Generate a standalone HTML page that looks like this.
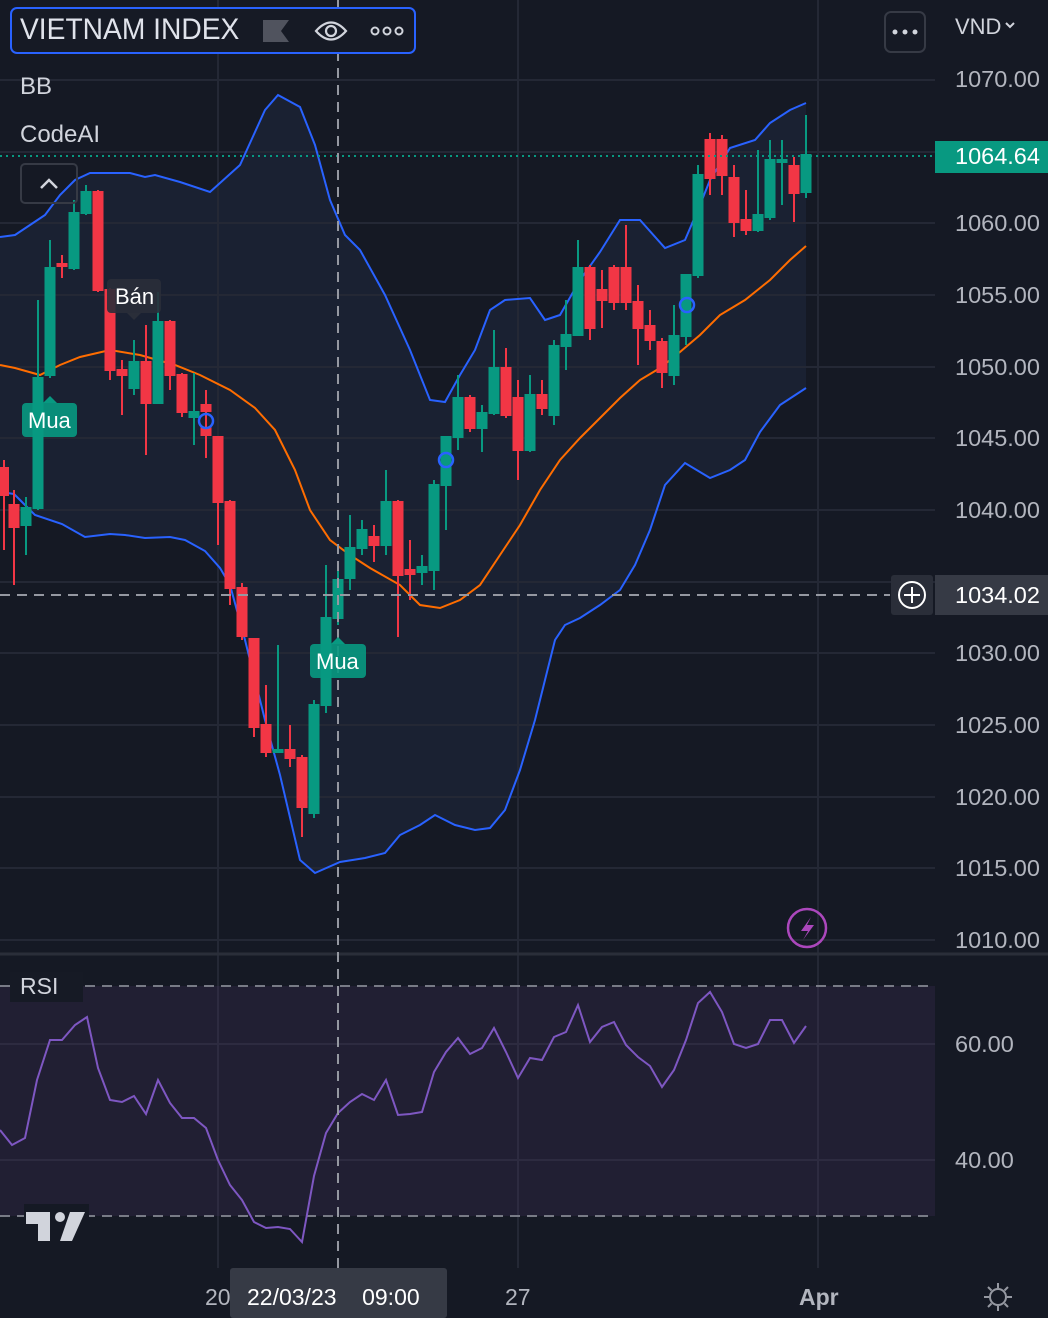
<!DOCTYPE html>
<html><head><meta charset="utf-8"><style>
html,body{margin:0;padding:0;background:#161a25;}
body{width:1048px;height:1318px;overflow:hidden;position:relative;font-family:"Liberation Sans",sans-serif;}
svg{position:absolute;left:0;top:0}
.t{position:absolute;color:#d1d4dc;white-space:nowrap}
.ax{position:absolute;left:955px;font-size:23.5px;color:#b2b5be;}
</style></head><body>
<svg width="1048" height="1318" viewBox="0 0 1048 1318">
<rect width="1048" height="1318" fill="#151924"/>
<polygon fill="#1a2132" points="0,237 15,235 30,225 45,215 60,195 75,180 90,173 130,173 145,177 155,175 180,182 210,192 240,165 265,110 278,95 300,107 315,145 330,200 345,235 360,250 385,295 410,350 430,400 445,402 460,375 475,350 490,310 505,300 530,298 545,320 560,315 580,280 600,252 620,220 640,220 665,248 685,240 700,205 710,180 730,148 755,140 770,123 790,110 806,103 806,388 780,405 760,432 745,460 730,470 710,478 685,463 665,485 650,530 635,565 620,590 600,605 580,618 565,625 555,640 545,680 535,720 520,770 505,810 490,828 475,830 455,825 435,815 420,825 400,835 385,853 365,858 340,862 315,873 300,860 280,775 265,720 245,640 230,585 220,568 205,551 185,540 170,537 145,538 125,535 110,534 85,537 62,524 35,515 25,505 14,494 0,492"/>
<g stroke="#242835" stroke-width="2">
<line x1="0" y1="80" x2="935" y2="80"/><line x1="0" y1="152" x2="935" y2="152"/><line x1="0" y1="223" x2="935" y2="223"/><line x1="0" y1="295" x2="935" y2="295"/><line x1="0" y1="367" x2="935" y2="367"/><line x1="0" y1="438" x2="935" y2="438"/><line x1="0" y1="510" x2="935" y2="510"/><line x1="0" y1="582" x2="935" y2="582"/><line x1="0" y1="653" x2="935" y2="653"/><line x1="0" y1="725" x2="935" y2="725"/><line x1="0" y1="797" x2="935" y2="797"/><line x1="0" y1="868" x2="935" y2="868"/><line x1="0" y1="940" x2="935" y2="940"/>
<line x1="218" y1="0" x2="218" y2="1268"/><line x1="518" y1="0" x2="518" y2="1268"/><line x1="818" y1="0" x2="818" y2="1268"/>
</g>
<line x1="0" y1="954" x2="1048" y2="954" stroke="#2a2e39" stroke-width="3"/>
<rect x="0" y="986" width="935" height="230" fill="#211f33"/>
<g stroke="#2d2b40" stroke-width="2"><line x1="0" y1="1044" x2="935" y2="1044"/><line x1="0" y1="1160" x2="935" y2="1160"/><line x1="218" y1="986" x2="218" y2="1216"/><line x1="518" y1="986" x2="518" y2="1216"/><line x1="818" y1="986" x2="818" y2="1216"/></g>
<g stroke="#787b86" stroke-width="2" stroke-dasharray="10,7"><line x1="0" y1="986" x2="935" y2="986"/><line x1="0" y1="1216" x2="935" y2="1216"/></g>
<polyline fill="none" stroke="#7e57c2" stroke-width="2" points="0,1130 12,1145 25,1138 37,1080 50,1040 62,1040 75,1025 87,1017 98,1068 110,1100 122,1102 134,1096 146,1114 158,1080 170,1103 182,1118 194,1118 206,1128 218,1160 230,1185 242,1200 254,1222 266,1228 278,1227 290,1229 302,1242 314,1176 326,1133 338,1113 350,1102 362,1094 374,1100 386,1080 398,1115 410,1114 422,1112 434,1072 446,1052 458,1038 470,1054 482,1048 494,1028 506,1052 518,1078 530,1058 542,1060 554,1037 566,1032 578,1005 590,1042 602,1027 614,1022 626,1045 638,1057 650,1066 662,1087 674,1070 686,1040 698,1003 710,992 722,1012 734,1044 746,1048 758,1044 770,1020 782,1020 794,1043 806,1026"/>
<polyline fill="none" stroke="#2962ff" stroke-width="2" points="0,237 15,235 30,225 45,215 60,195 75,180 90,173 130,173 145,177 155,175 180,182 210,192 240,165 265,110 278,95 300,107 315,145 330,200 345,235 360,250 385,295 410,350 430,400 445,402 460,375 475,350 490,310 505,300 530,298 545,320 560,315 580,280 600,252 620,220 640,220 665,248 685,240 700,205 710,180 730,148 755,140 770,123 790,110 806,103"/>
<polyline fill="none" stroke="#2962ff" stroke-width="2" points="0,492 14,494 25,505 35,515 62,524 85,537 110,534 125,535 145,538 170,537 185,540 205,551 220,568 230,585 245,640 265,720 280,775 300,860 315,873 340,862 365,858 385,853 400,835 420,825 435,815 455,825 475,830 490,828 505,810 520,770 535,720 545,680 555,640 565,625 580,618 600,605 620,590 635,565 650,530 665,485 685,463 710,478 730,470 745,460 760,432 780,405 806,388"/>
<polyline fill="none" stroke="#ff6d00" stroke-width="2" points="0,365 15,368 40,375 60,365 80,357 110,350 140,355 175,365 200,375 230,390 255,408 275,430 295,470 310,510 330,540 350,555 370,568 400,585 420,605 440,608 460,600 480,585 500,555 520,525 540,490 560,460 580,438 600,418 620,398 640,380 660,368 680,352 700,335 720,315 745,300 770,280 790,260 806,246"/>
<g stroke="#f23645" fill="#f23645" stroke-width="2">
<line x1="4" y1="460" x2="4" y2="550"/><rect x="0" y="468" width="8" height="27"/>
<line x1="14" y1="490" x2="14" y2="585"/><rect x="9.5" y="505" width="9" height="22"/>
<line x1="62" y1="255" x2="62" y2="278"/><rect x="57.5" y="264" width="9" height="2"/>
<line x1="98" y1="190" x2="98" y2="292"/><rect x="93.5" y="192" width="9" height="98"/>
<line x1="110" y1="288" x2="110" y2="380"/><rect x="105.5" y="290" width="9" height="80"/>
<line x1="122" y1="360" x2="122" y2="415"/><rect x="117.5" y="370" width="9" height="5"/>
<line x1="146" y1="325" x2="146" y2="455"/><rect x="141.5" y="362" width="9" height="41"/>
<line x1="170" y1="320" x2="170" y2="390"/><rect x="165.5" y="322" width="9" height="53"/>
<line x1="182" y1="373" x2="182" y2="417"/><rect x="177.5" y="375" width="9" height="37"/>
<line x1="206" y1="390" x2="206" y2="458"/><rect x="201.5" y="405" width="9" height="6"/><rect x="201.5" y="428" width="9" height="7"/>
<line x1="218" y1="437" x2="218" y2="545"/><rect x="213.5" y="437" width="9" height="65"/>
<line x1="230" y1="500" x2="230" y2="605"/><rect x="225.5" y="502" width="9" height="86"/>
<line x1="242" y1="583" x2="242" y2="640"/><rect x="237.5" y="588" width="9" height="48"/>
<line x1="254" y1="639" x2="254" y2="737"/><rect x="249.5" y="639" width="9" height="88"/>
<line x1="266" y1="685" x2="266" y2="757"/><rect x="261.5" y="725" width="9" height="27"/>
<line x1="290" y1="725" x2="290" y2="767"/><rect x="285.5" y="750" width="9" height="8"/>
<line x1="302" y1="755" x2="302" y2="837"/><rect x="297.5" y="758" width="9" height="49"/>
<line x1="374" y1="525" x2="374" y2="562"/><rect x="369.5" y="537" width="9" height="8"/>
<line x1="398" y1="500" x2="398" y2="637"/><rect x="393.5" y="502" width="9" height="73"/>
<line x1="410" y1="540" x2="410" y2="600"/><rect x="405.5" y="570" width="9" height="4"/>
<line x1="470" y1="395" x2="470" y2="432"/><rect x="465.5" y="398" width="9" height="30"/>
<line x1="506" y1="348" x2="506" y2="418"/><rect x="501.5" y="368" width="9" height="47"/>
<line x1="518" y1="380" x2="518" y2="480"/><rect x="513.5" y="398" width="9" height="52"/>
<line x1="542" y1="380" x2="542" y2="415"/><rect x="537.5" y="395" width="9" height="13"/>
<line x1="590" y1="265" x2="590" y2="340"/><rect x="585.5" y="268" width="9" height="60"/>
<line x1="602" y1="270" x2="602" y2="328"/><rect x="597.5" y="290" width="9" height="10"/>
<line x1="614" y1="265" x2="614" y2="310"/><rect x="609.5" y="268" width="9" height="34"/>
<line x1="626" y1="225" x2="626" y2="310"/><rect x="621.5" y="268" width="9" height="34"/>
<line x1="638" y1="285" x2="638" y2="365"/><rect x="633.5" y="302" width="9" height="26"/>
<line x1="650" y1="310" x2="650" y2="350"/><rect x="645.5" y="326" width="9" height="14"/>
<line x1="662" y1="338" x2="662" y2="388"/><rect x="657.5" y="342" width="9" height="30"/>
<line x1="710" y1="133" x2="710" y2="195"/><rect x="705.5" y="140" width="9" height="38"/>
<line x1="722" y1="135" x2="722" y2="195"/><rect x="717.5" y="140" width="9" height="35"/>
<line x1="734" y1="165" x2="734" y2="237"/><rect x="729.5" y="178" width="9" height="44"/>
<line x1="746" y1="190" x2="746" y2="235"/><rect x="741.5" y="220" width="9" height="10"/>
<line x1="794" y1="157" x2="794" y2="222"/><rect x="789.5" y="166" width="9" height="27"/>
</g>
<g stroke="#089981" fill="#089981" stroke-width="2">
<line x1="26" y1="497" x2="26" y2="555"/><rect x="21.5" y="508" width="9" height="17"/>
<line x1="38" y1="300" x2="38" y2="510"/><rect x="33.5" y="378" width="9" height="130"/>
<line x1="50" y1="240" x2="50" y2="378"/><rect x="45.5" y="268" width="9" height="107"/>
<line x1="74" y1="200" x2="74" y2="270"/><rect x="69.5" y="213" width="9" height="55"/>
<line x1="86" y1="185" x2="86" y2="215"/><rect x="81.5" y="192" width="9" height="21"/>
<line x1="134" y1="340" x2="134" y2="395"/><rect x="129.5" y="362" width="9" height="26"/>
<line x1="158" y1="292" x2="158" y2="403"/><rect x="153.5" y="322" width="9" height="81"/>
<line x1="194" y1="373" x2="194" y2="445"/><rect x="189.5" y="412" width="9" height="5"/>
<line x1="278" y1="645" x2="278" y2="752"/><rect x="273.5" y="750" width="9" height="2"/>
<line x1="314" y1="700" x2="314" y2="818"/><rect x="309.5" y="705" width="9" height="108"/>
<line x1="326" y1="565" x2="326" y2="713"/><rect x="321.5" y="618" width="9" height="87"/>
<line x1="338" y1="565" x2="338" y2="625"/><rect x="333.5" y="580" width="9" height="38"/>
<line x1="350" y1="515" x2="350" y2="590"/><rect x="345.5" y="548" width="9" height="30"/>
<line x1="362" y1="520" x2="362" y2="555"/><rect x="357.5" y="530" width="9" height="18"/>
<line x1="386" y1="470" x2="386" y2="555"/><rect x="381.5" y="502" width="9" height="43"/>
<line x1="422" y1="555" x2="422" y2="585"/><rect x="417.5" y="567" width="9" height="5"/>
<line x1="434" y1="480" x2="434" y2="590"/><rect x="429.5" y="485" width="9" height="85"/>
<line x1="446" y1="437" x2="446" y2="530"/><rect x="441.5" y="437" width="9" height="48"/>
<line x1="458" y1="375" x2="458" y2="450"/><rect x="453.5" y="398" width="9" height="39"/>
<line x1="482" y1="405" x2="482" y2="452"/><rect x="477.5" y="413" width="9" height="15"/>
<line x1="494" y1="330" x2="494" y2="415"/><rect x="489.5" y="368" width="9" height="45"/>
<line x1="530" y1="375" x2="530" y2="452"/><rect x="525.5" y="395" width="9" height="55"/>
<line x1="554" y1="340" x2="554" y2="425"/><rect x="549.5" y="346" width="9" height="69"/>
<line x1="566" y1="300" x2="566" y2="370"/><rect x="561.5" y="335" width="9" height="11"/>
<line x1="578" y1="240" x2="578" y2="335"/><rect x="573.5" y="268" width="9" height="67"/>
<line x1="674" y1="305" x2="674" y2="385"/><rect x="669.5" y="336" width="9" height="39"/>
<line x1="686" y1="275" x2="686" y2="345"/><rect x="681.5" y="275" width="9" height="61"/>
<line x1="698" y1="165" x2="698" y2="278"/><rect x="693.5" y="175" width="9" height="100"/>
<line x1="758" y1="150" x2="758" y2="232"/><rect x="753.5" y="215" width="9" height="15"/>
<line x1="770" y1="140" x2="770" y2="220"/><rect x="765.5" y="160" width="9" height="57"/>
<line x1="782" y1="140" x2="782" y2="205"/><rect x="777.5" y="160" width="9" height="2"/>
<line x1="806" y1="115" x2="806" y2="198"/><rect x="801.5" y="155" width="9" height="37"/>
</g>
<g fill="none" stroke="#2962ff" stroke-width="2.5"><circle cx="206" cy="421" r="7"/><circle cx="446" cy="460" r="7"/><circle cx="687" cy="305" r="7"/></g>
<line x1="0" y1="156" x2="935" y2="156" stroke="#089981" stroke-width="2" stroke-dasharray="2,4"/>
<g stroke="#9598a1" stroke-width="2" stroke-dasharray="10,7"><line x1="0" y1="595" x2="890" y2="595"/><line x1="338" y1="0" x2="338" y2="1268"/></g>
<rect x="22" y="403" width="55" height="34" rx="4" fill="#089981" opacity="0.9"/><polygon points="43,403 50,396 57,403" fill="#089981"/>
<rect x="310" y="644" width="56" height="34" rx="4" fill="#089981" opacity="0.9"/><polygon points="331,644 338,637 345,644" fill="#089981"/>
<rect x="107" y="279" width="54" height="34" rx="4" fill="#2a2e39" opacity="0.9"/><polygon points="127,313 134,320 141,313" fill="#2a2e39"/>
<rect x="11" y="8" width="404" height="45" rx="6" fill="#161a25" stroke="#2962ff" stroke-width="2"/>
<path d="M263 20 H289 L281 31 L289 42 H263 Z" fill="#50535e"/>
<path d="M316 31 Q331 14 346 31 Q331 48 316 31 Z" fill="none" stroke="#d1d4dc" stroke-width="2.2"/><circle cx="331" cy="31" r="5" fill="none" stroke="#d1d4dc" stroke-width="2.2"/>
<g fill="none" stroke="#d1d4dc" stroke-width="2"><circle cx="375" cy="31" r="3.5"/><circle cx="387" cy="31" r="3.5"/><circle cx="399" cy="31" r="3.5"/></g>
<rect x="21" y="164" width="56" height="39" rx="4" fill="none" stroke="#363a45" stroke-width="2"/>
<path d="M41 188 L49 180 L57 188" fill="none" stroke="#d1d4dc" stroke-width="2.5"/>
<rect x="885" y="12" width="40" height="40" rx="6" fill="none" stroke="#363a45" stroke-width="2"/>
<g fill="#d1d4dc"><circle cx="895" cy="32" r="2.5"/><circle cx="905" cy="32" r="2.5"/><circle cx="915" cy="32" r="2.5"/></g>
<path d="M1006 23 L1010 27 L1014 23" fill="none" stroke="#d1d4dc" stroke-width="2"/>
<rect x="935" y="141" width="113" height="32" fill="#089981"/>
<rect x="891" y="575" width="42" height="40" rx="3" fill="#2a2e39"/>
<circle cx="912" cy="595" r="13" fill="none" stroke="#fff" stroke-width="2"/><path d="M912 587 V603 M904 595 H920" stroke="#fff" stroke-width="2"/>
<rect x="935" y="575" width="113" height="40" fill="#363a45"/>
<circle cx="807" cy="928" r="19" fill="none" stroke="#ab47bc" stroke-width="2.5"/>
<path d="M811 917 L801 931 H808 L803 940 L814 925 H807 Z" fill="#ab47bc"/>
<rect x="10" y="972" width="73" height="30" fill="#161a25"/>
<rect x="24" y="1204" width="65" height="40" fill="#151924"/>
<path d="M26 1212 H50 V1241 H38 V1224 H26 Z" fill="#d1d4dc"/><circle cx="60" cy="1217" r="5" fill="#d1d4dc"/><path d="M70 1212 H85 L72 1241 H60 Z" fill="#d1d4dc"/>
<rect x="230" y="1268" width="217" height="50" rx="3" fill="#363a45"/>
<g stroke="#9598a1" stroke-width="2" fill="none"><circle cx="998" cy="1297" r="8"/><path d="M998 1283 V1288 M998 1306 V1311 M984 1297 H989 M1007 1297 H1012 M988 1287 L991.5 1290.5 M1004.5 1303.5 L1008 1307 M1008 1287 L1004.5 1290.5 M991.5 1303.5 L988 1307"/></g>
</svg>
<div class="t" style="left:20px;top:13px;font-size:30px;color:#e0e3eb;transform:scaleX(0.94);transform-origin:left">VIETNAM INDEX</div>
<div class="t" style="left:20px;top:73px;font-size:24px">BB</div>
<div class="t" style="left:20px;top:121px;font-size:24px">CodeAI</div>
<div class="t" style="left:115px;top:284px;font-size:22px;color:#fff">Bán</div>
<div class="t" style="left:28px;top:408px;font-size:22px;color:#fff">Mua</div>
<div class="t" style="left:316px;top:649px;font-size:22px;color:#fff">Mua</div>
<div class="t" style="left:20px;top:973px;font-size:23px">RSI</div>
<div class="t" style="left:955px;top:14px;font-size:22px">VND</div>
<div class="ax" style="top:66px">1070.00</div>
<div class="ax" style="top:143px;color:#fff">1064.64</div>
<div class="ax" style="top:210px">1060.00</div>
<div class="ax" style="top:282px">1055.00</div>
<div class="ax" style="top:354px">1050.00</div>
<div class="ax" style="top:425px">1045.00</div>
<div class="ax" style="top:497px">1040.00</div>
<div class="ax" style="top:582px;color:#fff">1034.02</div>
<div class="ax" style="top:640px">1030.00</div>
<div class="ax" style="top:712px">1025.00</div>
<div class="ax" style="top:784px">1020.00</div>
<div class="ax" style="top:855px">1015.00</div>
<div class="ax" style="top:927px">1010.00</div>
<div class="ax" style="top:1031px">60.00</div>
<div class="ax" style="top:1147px">40.00</div>
<div class="t" style="left:205px;top:1284px;font-size:23px;color:#b2b5be">20</div>
<div class="t" style="left:247px;top:1284px;font-size:23px;color:#fff">22/03/23&nbsp;&nbsp;&nbsp;&nbsp;09:00</div>
<div class="t" style="left:505px;top:1284px;font-size:23px;color:#b2b5be">27</div>
<div class="t" style="left:799px;top:1284px;font-size:23px;color:#b2b5be;font-weight:bold">Apr</div>
</body></html>
